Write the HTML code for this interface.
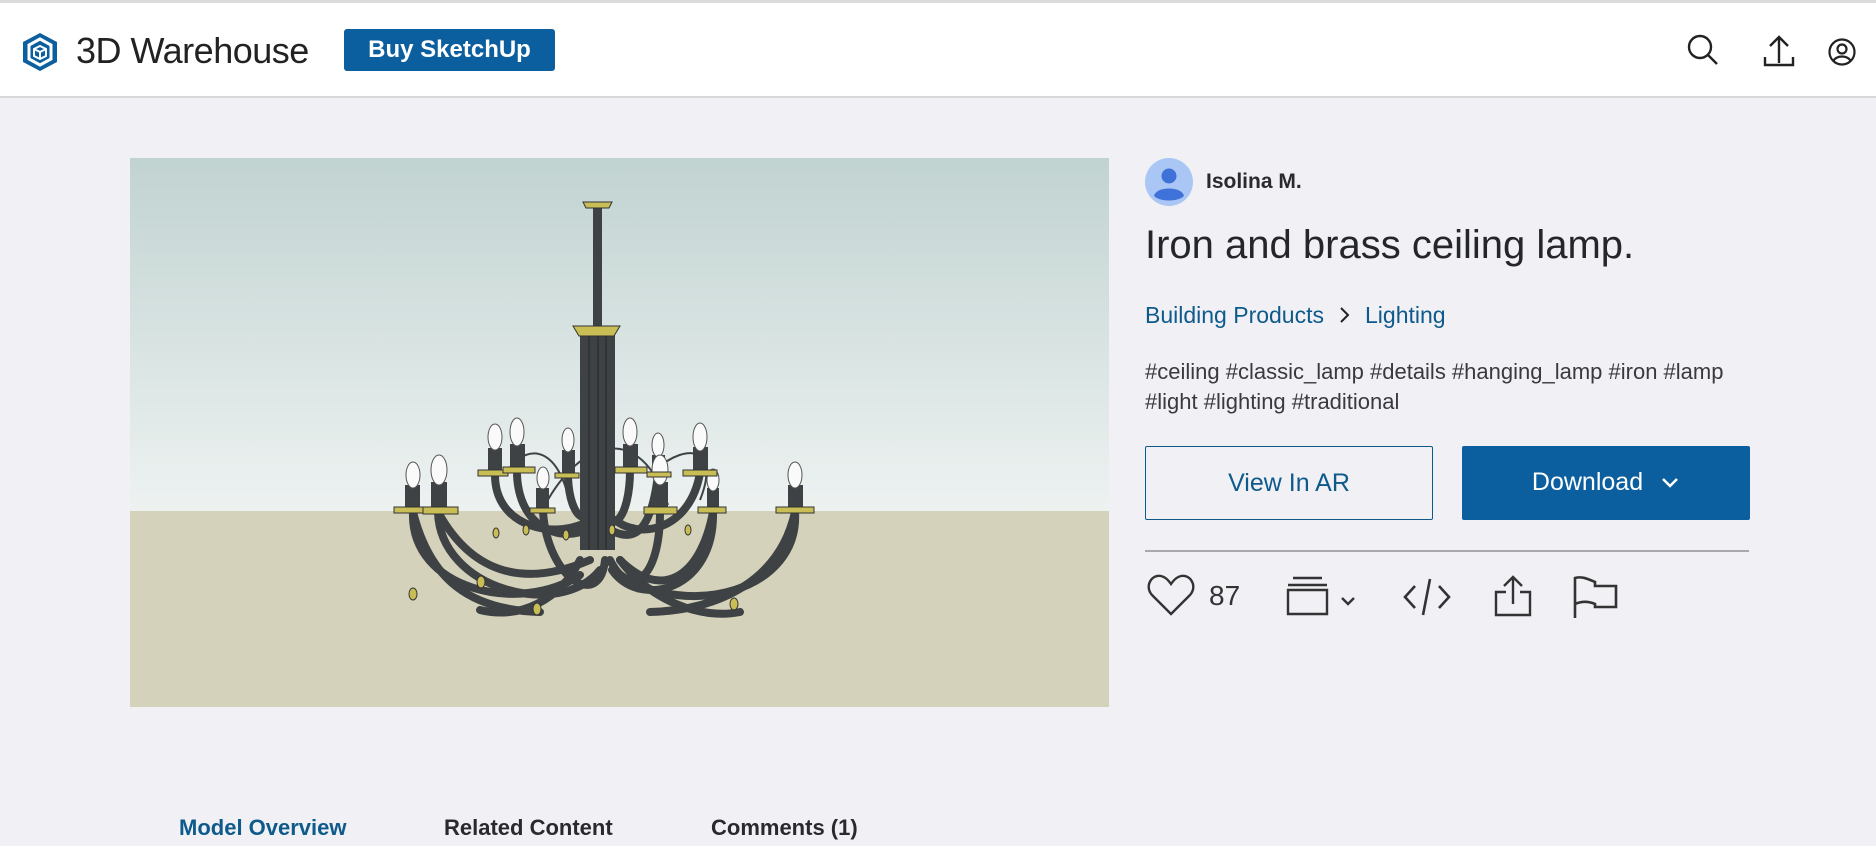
<!DOCTYPE html>
<html><head><meta charset="utf-8"><style>
*{margin:0;padding:0;box-sizing:border-box}
body{width:1876px;height:846px;overflow:hidden;background:#f0f0f5;font-family:"Liberation Sans",sans-serif;color:#2a2a2e;position:relative}
.hdr{position:absolute;left:0;top:0;width:1876px;height:98px;background:#fff;border-top:3px solid #dcdcdc;border-bottom:2px solid #d8d8d8}
.abs{position:absolute}
.logo-t{left:76px;top:27px;font-size:36px;color:#222;letter-spacing:-0.5px}
.buy{left:344px;top:26px;width:211px;height:42px;background:#0b5f9e;border-radius:3px;color:#fff;font-weight:bold;font-size:24px;text-align:center;line-height:42px}
.img{left:130px;top:158px;width:979px;height:549px;overflow:hidden}
.blue{color:#0e5a8a}
.btn{top:446px;width:288px;height:74px;font-size:25px;text-align:center;line-height:72px}
.tab{top:815px;font-size:22px;font-weight:bold}
</style></head><body>
<div class="hdr">
<svg class="abs" style="left:20px;top:28px" width="40" height="42" viewBox="0 0 40 42"><path d="M20 2 L37 11 V31 L20 40 L3 31 V11 Z" fill="#0b5f9e"/><path d="M20 8 L31 14 V28 L20 34 L9 28 V14 Z" fill="none" stroke="#fff" stroke-width="3"/><path d="M20 15 L26 18 V25 L20 28 L14 25 V18 Z M14 18 L20 21 L26 18 M20 21 V28" fill="none" stroke="#fff" stroke-width="2"/></svg>
<div class="abs logo-t">3D Warehouse</div>
<div class="abs buy">Buy SketchUp</div>
<svg class="abs" style="left:1685px;top:29px" width="36" height="36" viewBox="0 0 36 36" fill="none" stroke="#222" stroke-width="2.4"><circle cx="15" cy="15" r="11"/><path d="M23 23 L32 32"/></svg>
<svg class="abs" style="left:1762px;top:30px" width="34" height="36" viewBox="0 0 34 36" fill="none" stroke="#222" stroke-width="2.4"><path d="M17 30 V5 M8 13 L17 4 L26 13 M3 24 V32 H31 V24"/></svg>
<svg class="abs" style="left:1827px;top:34px" width="30" height="30" viewBox="0 0 30 30" fill="none" stroke="#222" stroke-width="2.2"><circle cx="15" cy="15" r="12.5"/><circle cx="15" cy="12" r="4.5"/><path d="M6.5 24 C9 18 21 18 23.5 24"/></svg>
</div>

<div class="abs img" style="background:linear-gradient(#c1d3d1 0%,#edf2f1 64%)">
<div class="abs" style="left:0;top:353px;width:979px;height:196px;background:#d5d2bb"></div>
<svg class="abs" style="left:0;top:0" width="979" height="549" viewBox="130 158 979 549">
<g fill="none" stroke="#3e4245" stroke-width="8" stroke-linecap="round">
<path d="M413 512 C410 590 520 615 580 575"/><path d="M438 512 C440 590 560 620 600 570"/>
<path d="M413 512 C430 580 470 610 540 612"/><path d="M438 512 C470 570 520 590 590 560"/>
<path d="M495 475 C495 530 560 540 590 520"/><path d="M517 475 C520 540 580 545 598 520"/>
<path d="M543 512 C548 580 600 610 605 560"/><path d="M568 478 C570 520 590 530 595 500"/>
<path d="M630 470 C630 520 610 535 605 510"/><path d="M658 475 C650 540 630 540 610 530"/>
<path d="M660 512 C660 580 630 600 610 560"/><path d="M700 473 C690 530 640 540 615 520"/>
<path d="M713 512 C715 590 640 610 612 570"/><path d="M795 512 C800 590 690 620 620 575"/>
<path d="M795 512 C780 580 720 610 650 612"/><path d="M713 512 C700 580 660 600 620 560"/>
<path d="M580 560 C560 600 520 620 480 610"/><path d="M620 560 C650 600 700 620 740 612"/>
</g>
<g fill="none" stroke="#3e4245" stroke-width="2"><path d="M508 470 C530 440 560 450 570 505"/><path d="M545 505 C580 440 640 420 668 505"/><path d="M655 470 C690 440 720 450 700 500"/></g>
<rect x="593" y="205" width="9" height="125" fill="#3e4245"/>
<rect x="580" y="330" width="35" height="220" fill="#3e4245"/>
<path d="M589 330 V550 M598 330 V550 M606 330 V550" stroke="#2c2f31" stroke-width="1.5"/>
<path d="M583 202 H612 L609 208 H586 Z" fill="#c9bd55" stroke="#333" stroke-width="1"/>
<path d="M573 326 H620 L614 336 H579 Z" fill="#c9bd55" stroke="#333" stroke-width="1"/>
<g fill="#3e4245">
<rect x="405" y="485" width="15" height="24"/><rect x="431" y="482" width="16" height="27"/><rect x="488" y="448" width="14" height="24"/><rect x="510" y="444" width="15" height="28"/><rect x="562" y="450" width="13" height="24"/><rect x="536" y="488" width="13" height="22"/><rect x="623" y="444" width="15" height="26"/><rect x="652" y="455" width="13" height="20"/><rect x="653" y="482" width="15" height="28"/><rect x="693" y="447" width="15" height="26"/><rect x="707" y="488" width="12" height="22"/><rect x="788" y="485" width="15" height="25"/>
</g>
<g fill="#fafafa" stroke="#555" stroke-width="1">
<ellipse cx="413" cy="475" rx="7" ry="13"/><ellipse cx="439" cy="470" rx="8" ry="15"/><ellipse cx="495" cy="437" rx="7" ry="13"/><ellipse cx="517" cy="432" rx="7" ry="14"/><ellipse cx="568" cy="440" rx="6" ry="12"/><ellipse cx="543" cy="478" rx="6" ry="11"/><ellipse cx="630" cy="432" rx="7" ry="14"/><ellipse cx="658" cy="445" rx="6" ry="12"/><ellipse cx="660" cy="470" rx="8" ry="15"/><ellipse cx="700" cy="437" rx="7" ry="14"/><ellipse cx="713" cy="480" rx="6" ry="11"/><ellipse cx="795" cy="475" rx="7" ry="13"/>
</g>
<g fill="#c9bd55" stroke="#333" stroke-width="1">
<rect x="394" y="507" width="38" height="6"/><rect x="423" y="507" width="35" height="7"/><rect x="478" y="470" width="30" height="6"/><rect x="503" y="467" width="32" height="6"/><rect x="555" y="473" width="24" height="5"/><rect x="530" y="508" width="25" height="5"/><rect x="615" y="467" width="32" height="6"/><rect x="647" y="472" width="24" height="5"/><rect x="644" y="507" width="33" height="7"/><rect x="683" y="470" width="34" height="6"/><rect x="698" y="507" width="28" height="6"/><rect x="776" y="507" width="38" height="6"/>
<ellipse cx="413" cy="594" rx="4" ry="6"/><ellipse cx="481" cy="582" rx="4" ry="6"/><ellipse cx="537" cy="609" rx="4" ry="6"/><ellipse cx="734" cy="604" rx="4" ry="6"/><ellipse cx="496" cy="533" rx="3" ry="5"/><ellipse cx="526" cy="530" rx="3" ry="5"/><ellipse cx="566" cy="535" rx="3" ry="5"/><ellipse cx="612" cy="530" rx="3" ry="5"/><ellipse cx="688" cy="530" rx="3" ry="5"/>
</g>
</svg>
</div>

<svg class="abs" style="left:1145px;top:158px" width="48" height="48" viewBox="0 0 48 48"><circle cx="24" cy="24" r="24" fill="#a9c6f4"/><circle cx="24" cy="18" r="7.5" fill="#3f72d9"/><path d="M9 38 C11 28 37 28 39 38 C33 44 15 44 9 38Z" fill="#3f72d9"/></svg>
<div class="abs" style="left:1206px;top:170px;font-size:21px;font-weight:bold">Isolina M.</div>
<div class="abs" style="left:1145px;top:223px;font-size:40px;color:#25262a">Iron and brass ceiling lamp.</div>
<div class="abs blue" style="left:1145px;top:302px;font-size:23px">Building Products</div>
<svg class="abs" style="left:1337px;top:305px" width="14" height="20" viewBox="0 0 14 20" fill="none" stroke="#222" stroke-width="2"><path d="M4 3 L11 10 L4 17"/></svg>
<div class="abs blue" style="left:1365px;top:302px;font-size:23px">Lighting</div>
<div class="abs" style="left:1145px;top:357px;font-size:22px;line-height:30px;color:#3a3a3e;width:640px">#ceiling #classic_lamp #details #hanging_lamp #iron #lamp<br>#light #lighting #traditional</div>
<div class="abs btn blue" style="left:1145px;border:1.5px solid #0e5a8a;border-radius:2px">View In AR</div>
<div class="abs btn" style="left:1462px;background:#0b5f9e;color:#fff;border-radius:2px">Download <svg width="20" height="14" viewBox="0 0 20 14" style="margin-left:10px" fill="none" stroke="#fff" stroke-width="2.5"><path d="M3 3 L10 10 L17 3"/></svg></div>
<div class="abs" style="left:1145px;top:550px;width:604px;height:2px;background:#a9a9ad"></div>
<svg class="abs" style="left:1146px;top:572px" width="50" height="46" viewBox="0 0 50 46" fill="none" stroke="#333" stroke-width="2.4"><path d="M25 42 L6 23 C-2 14 6 2 15 4 C20 5 23 9 25 12 C27 9 30 5 35 4 C44 2 52 14 44 23 Z"/></svg>
<div class="abs" style="left:1209px;top:580px;font-size:28px;color:#333">87</div>
<svg class="abs" style="left:1286px;top:576px" width="76" height="40" viewBox="0 0 76 40" fill="none" stroke="#333" stroke-width="2.4"><path d="M7 2 H36 M2 9 H41 M2 14 H41 V38 H2 Z M56 22 L62 28 L68 22"/></svg>
<svg class="abs" style="left:1402px;top:576px" width="50" height="42" viewBox="0 0 50 42" fill="none" stroke="#333" stroke-width="2.6"><path d="M13 10 L3 21 L13 32 M37 10 L47 21 L37 32 M28 3 L21 39"/></svg>
<svg class="abs" style="left:1493px;top:574px" width="40" height="44" viewBox="0 0 40 44" fill="none" stroke="#333" stroke-width="2.4"><path d="M20 30 V4 M11 12 L20 3 L29 12 M13 18 H3 V41 H37 V18 H27"/></svg>
<svg class="abs" style="left:1572px;top:574px" width="48" height="46" viewBox="0 0 48 46" fill="none" stroke="#333" stroke-width="2.6"><path d="M3 44 V4 C10 2 16 5 23 8 V12 H44 V33 H23 V30 C16 27 10 27 3 30"/></svg>
<div class="abs tab blue" style="left:179px">Model Overview</div>
<div class="abs tab" style="left:444px">Related Content</div>
<div class="abs tab" style="left:711px">Comments (1)</div>
</body></html>
